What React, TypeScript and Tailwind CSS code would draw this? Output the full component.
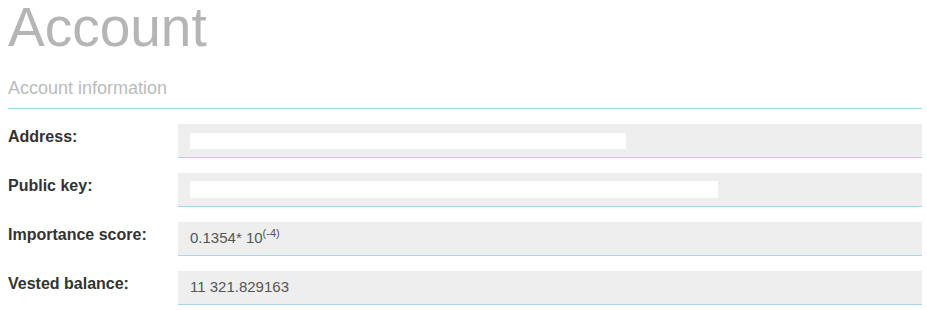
import React from "react";

const rows: { label: string; value: React.ReactNode }[] = [
  { label: "Address:", value: <div className="h-[16px] w-[436px] bg-white" /> },
  { label: "Public key:", value: <div className="h-[17px] w-[528px] bg-white" /> },
  {
    label: "Importance score:",
    value: (
      <span>
        0.1354* 10<sup className="text-[11px] relative top-[-6px]">(-4)</sup>
      </span>
    ),
  },
  { label: "Vested balance:", value: <span>11 321.829163</span> },
];

export default function App() {
  return (
    <div className="bg-white min-h-[310px] pl-2 pr-[5px] font-['Liberation_Sans',Arial,sans-serif]">
      <h1 className="text-[55px] leading-[54px] font-normal text-[#b5b5b5]">Account</h1>
      <h2 className="mt-[24px] text-[18px] leading-[21px] font-normal text-[#bbbbbb] pb-[9px] border-b border-[#a8d5ee]">
        Account information
      </h2>
      <div className="mt-[15px] flex flex-col gap-[15px]">
        {rows.map((r) => (
          <div key={r.label} className="flex">
            <div className="w-[170px] shrink-0 pt-[4px] text-[16px] leading-[18px] font-bold text-[#333333]">
              {r.label}
            </div>
            <div className="flex-1 h-[34px] bg-[#eeeeee] border-b border-[#a8d5ee] pl-[12px] flex items-center text-[15px] text-[#555555]">
              {r.value}
            </div>
          </div>
        ))}
      </div>
    </div>
  );
}
